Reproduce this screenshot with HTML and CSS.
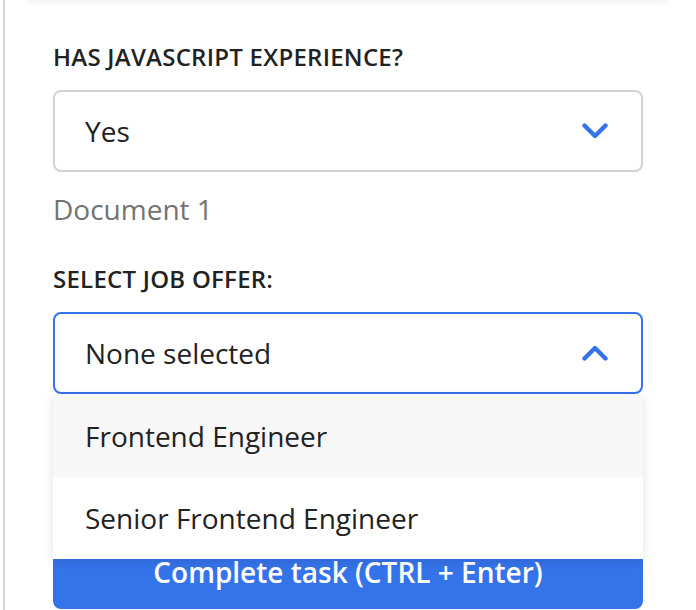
FILE: index.html
```html
<!DOCTYPE html>
<html lang="en">
<head>
<meta charset="utf-8">
<title>Task form</title>
<link rel="stylesheet" href="styles.css">
</head>
<body>
<div class="panel">
  <div class="prev-card"></div>
  <form class="form">
    <div class="field">
      <label class="label">HAS JAVASCRIPT EXPERIENCE?</label>
      <div class="select">
        <span class="value">Yes</span>
        <svg class="chev" width="26" height="16" viewBox="0 0 26 16"><path d="M2.5 2.5 L13 13 L23.5 2.5" fill="none" stroke="currentColor" stroke-width="4.4" stroke-linecap="round" stroke-linejoin="round"/></svg>
      </div>
    </div>
    <div class="doc">Document 1</div>
    <div class="field field-job">
      <label class="label">SELECT JOB OFFER:</label>
      <div class="select-wrap">
        <div class="select open">
          <span class="value">None selected</span>
          <svg class="chev" width="26" height="16" viewBox="0 0 26 16"><path d="M2.5 13.5 L13 3 L23.5 13.5" fill="none" stroke="currentColor" stroke-width="4.4" stroke-linecap="round" stroke-linejoin="round"/></svg>
        </div>
        <ul class="menu">
          <li class="option active">Frontend Engineer</li>
          <li class="option">Senior Frontend Engineer</li>
        </ul>
      </div>
    </div>
    <button type="button" class="submit">Complete task (CTRL + Enter)</button>
  </form>
</div>
</body>
</html>
```
FILE: styles.css
```css
html, body {
  margin: 0;
  padding: 0;
  background: #fff;
}
body {
  font-family: "Open Sans", "Noto Sans", sans-serif;
  color: #222;
  overflow: hidden;
}
.panel {
  margin-left: 3px;
  border-left: 2px solid #d6d6d6;
  min-height: 610px;
}
.prev-card {
  height: 0;
  margin: 0 30px 0 24px;
  box-shadow: 0 0 6px 2px rgba(0, 0, 0, 0.09);
}
.form {
  width: 590px;
  margin-left: 48px;
  padding-top: 41px;
}
.label {
  display: block;
  font-size: 24px;
  font-weight: 600;
  line-height: 32px;
  letter-spacing: 0.25px;
  margin-bottom: 17px;
  color: #222;
}
.select {
  box-sizing: border-box;
  height: 82px;
  border: 2px solid #d2d2d2;
  border-radius: 8px;
  display: flex;
  align-items: center;
  justify-content: space-between;
  padding: 0 33px 0 30px;
  font-size: 28px;
  background: #fff;
}
.select.open {
  border-color: #3573ea;
}
.chev {
  color: #3573ea;
  display: block;
}
.doc {
  font-size: 28px;
  line-height: 38px;
  color: #737373;
  margin-top: 18px;
}
.field-job {
  margin-top: 35px;
}
.select-wrap {
  position: relative;
}
.menu {
  position: absolute;
  top: calc(100% + 1px);
  left: 0;
  right: 0;
  margin: 0;
  padding: 0;
  list-style: none;
  background: #fff;
  box-shadow: 0 2px 10px rgba(0, 0, 0, 0.12);
  z-index: 2;
}
.option {
  height: 82px;
  display: flex;
  align-items: center;
  padding-left: 32px;
  font-size: 28px;
  color: #222;
}
.option.active {
  background: #f7f7f7;
}
.submit {
  display: block;
  width: 100%;
  height: 74px;
  margin-top: 141px;
  border: 0;
  border-radius: 8px;
  background: #3573ea;
  color: #fff;
  font-family: "Open Sans", "Noto Sans", sans-serif;
  font-size: 28px;
  font-weight: 600;
  padding: 0;
}
```
